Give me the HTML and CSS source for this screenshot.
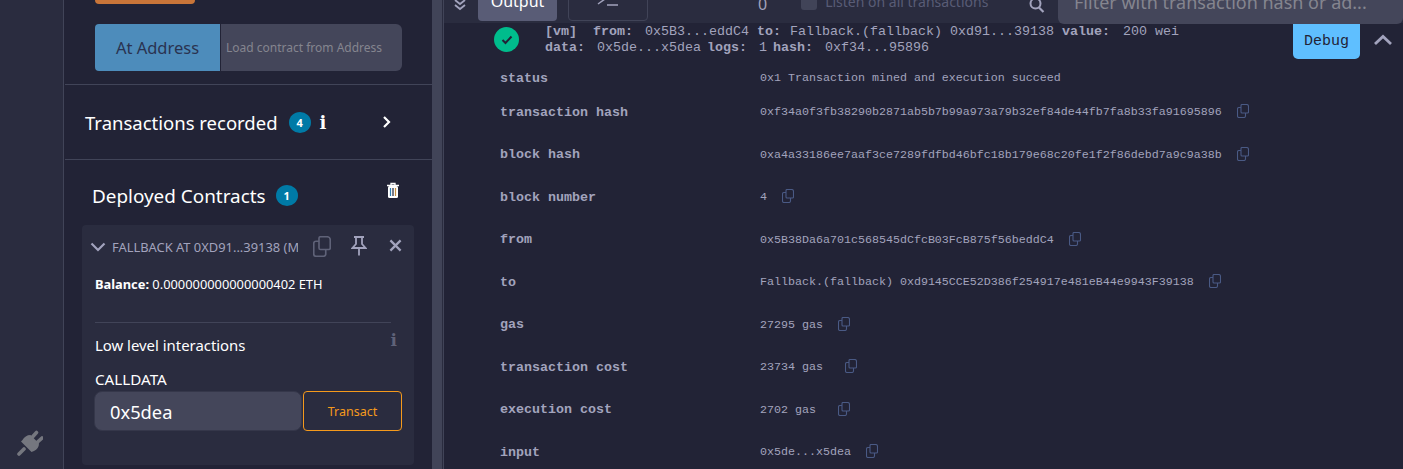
FILE: index.html
```html
<!DOCTYPE html>
<html lang="en">
<head>
    <meta charset="UTF-8">
    <meta name="viewport" content="width=device-width, initial-scale=1.0">
    <title>Remix - Fallback</title>
    <link rel="stylesheet" href="styles.css">
</head>
<body>
    <svg class="svg-defs" width="0" height="0">
        <symbol id="copy" viewBox="0 0 12 14">
            <path d="M4 1.500c0-.6.4-1 1-1h4.500c1 0 2 1 2 2v5.500c0 .6-.4 1-1 1H5c-.6 0-1-.4-1-1z" fill="none" stroke="currentColor" stroke-width="1.100"/>
            <path d="M4 3.500H2c-.8 0-1.500.6-1.500 1.500v7c0 .8.6 1.500 1.500 1.500h5c.8 0 1.500-.6 1.500-1.500v-3" fill="none" stroke="currentColor" stroke-width="1.100"/>
        </symbol>
    </svg>
    <div class="app">
        <div class="icon-panel">
            <svg class="plug" viewBox="0 0 26 26">
                <path d="M2 24l5-5" stroke="#75777f" stroke-width="3.600" stroke-linecap="round"/>
                <path d="M4 11.500l10.500 10.500 2.500-1c3-1.500 5-4 5-7.500l-8.500-8.500c-3.500 0-6.500 2-8 5z" fill="#75777f"/>
                <path d="M15 7.500l4.500-5M20 12.500l5-4.500" stroke="#75777f" stroke-width="3.600" stroke-linecap="round"/>
            </svg>
        </div>

        <div class="sidebar">
            <div class="deploy-btn"></div>
            <div class="at-address">
                <span class="at-btn">At Address</span>
                <span class="at-input">Load contract from Address</span>
            </div>
            <div class="tx-recorded">
                <span class="section-title">Transactions recorded</span>
                <span class="badge">4</span>
                <span class="info-white">i</span>
                <svg class="chevron-right" viewBox="0 0 10 14"><path d="M2 2l5 5-5 5" fill="none" stroke="#fff" stroke-width="2.200"/></svg>
            </div>
            <div class="deployed">
                <div class="deployed-head">
                    <span class="section-title section-title-wide">Deployed Contracts</span>
                    <span class="badge">1</span>
                    <svg class="trash" viewBox="0 0 14 16">
                        <path d="M1 3h12M5 3V1h4v2" fill="none" stroke="#fff" stroke-width="1.300"/>
                        <rect x="2" y="3.500" width="10" height="12" rx="1.500" fill="#fff"/>
                        <path d="M4.500 5.500v8" stroke="#2f7fb5" stroke-width="1.200"/>
                        <path d="M7 5.500v8" stroke="#222336" stroke-width="1.200"/>
                        <path d="M9.500 5.500v8" stroke="#c9913f" stroke-width="1.200"/>
                    </svg>
                </div>
                <div class="instance">
                    <div class="instance-head">
                        <svg class="chevron-down" viewBox="0 0 16 10"><path d="M1.500 1.500l6.500 6.500 6.500-6.500" fill="none" stroke="#a2a3bd" stroke-width="2.200"/></svg>
                        <span class="instance-name">FALLBACK AT 0XD91...39138 (MEMORY)</span>
                        <svg class="head-copy"><use href="#copy"/></svg>
                        <svg class="pin" viewBox="0 0 16 20">
                            <path d="M3 1h10M5 1v7l-3.500 4h13L11 8V1M8 12v7.500" fill="none" stroke="currentColor" stroke-width="1.800"/>
                        </svg>
                        <svg class="close" viewBox="0 0 14 14"><path d="M1.500 1.500l11 11M12.500 1.500l-11 11" stroke="currentColor" stroke-width="2.400"/></svg>
                    </div>
                    <div class="balance"><b>Balance:</b> 0.000000000000000402 ETH</div>
                    <div class="divider"></div>
                    <div class="low-level-title">
                        <span>Low level interactions</span>
                        <span class="info-grey">i</span>
                    </div>
                    <div class="calldata-label">CALLDATA</div>
                    <div class="calldata-row">
                        <span class="calldata-input">0x5dea</span>
                        <span class="transact-btn">Transact</span>
                    </div>
                </div>
            </div>
        </div>

        <div class="scrollbar"></div>

        <div class="main">
            <div class="toolbar">
                <svg class="double-chevron" viewBox="0 0 14 14">
                    <path d="M2 0l5 4 5-4M2 5l5 4 5-4" fill="none" stroke="#a2a3bd" stroke-width="1.800"/>
                </svg>
                <span class="tab tab-active">Output</span>
                <span class="tab tab-term">
                    <svg viewBox="0 0 22 14" width="22" height="14"><path d="M1 0l7 5-7 5M10 11h11" fill="none" stroke="#a2a3bd" stroke-width="1.500"/></svg>
                </span>
                <span class="tx-count">0</span>
                <span class="listen-check"></span>
                <span class="listen-label">Listen on all transactions</span>
                <svg class="search" viewBox="0 0 16 16">
                    <circle cx="6.500" cy="3.500" r="5" fill="none" stroke="#a2a3bd" stroke-width="2"/>
                    <path d="M10 7.500l4.500 4.500" stroke="#a2a3bd" stroke-width="2.200"/>
                </svg>
                <span class="filter">Filter with transaction hash or ad...</span>
            </div>

            <div class="log">
                <div class="log-head">
                    <span class="check">
                        <svg viewBox="0 0 12 10" width="12" height="10"><path d="M1.500 5l3 3 6-6.500" fill="none" stroke="#222336" stroke-width="2"/></svg>
                    </span>
                    <div class="log-summary">
                        <div><b class="key-vm">[vm]</b> &nbsp;<b>from:</b> 0x5B3...eddC4 <b class="key-to">to:</b> Fallback.(fallback) 0xd91...39138 <b class="key-value">value:</b> 200 wei</div>
                        <div><b>data:</b> 0x5de...x5dea <b class="key-logs">logs:</b> 1 <b class="key-hash">hash:</b> 0xf34...95896</div>
                    </div>
                    <span class="debug-btn">Debug</span>
                    <svg class="chevron-up" viewBox="0 0 20 12"><path d="M2 10l8-7.500 8 7.500" fill="none" stroke="#a2a3bd" stroke-width="2.800"/></svg>
                </div>

                <div class="tx-table">
                    <div class="tx-row tx-row-first"><span class="tx-key">status</span><span class="tx-val">0x1 Transaction mined and execution succeed</span></div>
                    <div class="tx-row"><span class="tx-key">transaction hash</span><span class="tx-val">0xf34a0f3fb38290b2871ab5b7b99a973a79b32ef84de44fb7fa8b33fa91695896</span><svg class="copy"><use href="#copy"/></svg></div>
                    <div class="tx-row"><span class="tx-key">block hash</span><span class="tx-val">0xa4a33186ee7aaf3ce7289fdfbd46bfc18b179e68c20fe1f2f86debd7a9c9a38b</span><svg class="copy"><use href="#copy"/></svg></div>
                    <div class="tx-row"><span class="tx-key">block number</span><span class="tx-val">4</span><svg class="copy"><use href="#copy"/></svg></div>
                    <div class="tx-row"><span class="tx-key">from</span><span class="tx-val">0x5B38Da6a701c568545dCfcB03FcB875f56beddC4</span><svg class="copy"><use href="#copy"/></svg></div>
                    <div class="tx-row"><span class="tx-key">to</span><span class="tx-val">Fallback.(fallback) 0xd9145CCE52D386f254917e481eB44e9943F39138</span><svg class="copy"><use href="#copy"/></svg></div>
                    <div class="tx-row"><span class="tx-key">gas</span><span class="tx-val">27295 gas</span><svg class="copy"><use href="#copy"/></svg></div>
                    <div class="tx-row"><span class="tx-key">transaction cost</span><span class="tx-val">23734 gas</span><svg class="copy copy-wide"><use href="#copy"/></svg></div>
                    <div class="tx-row"><span class="tx-key">execution cost</span><span class="tx-val">2702 gas</span><svg class="copy copy-wide"><use href="#copy"/></svg></div>
                    <div class="tx-row"><span class="tx-key">input</span><span class="tx-val">0x5de...x5dea</span><svg class="copy"><use href="#copy"/></svg></div>
                </div>
            </div>
        </div>
    </div>
</body>
</html>
```

FILE: styles.css
```css
html, body {
    margin: 0;
    padding: 0;
    height: 100%;
    overflow: hidden;
    background: #222336;
}
body {
    font-family: "Noto Sans", "Open Sans", sans-serif;
    color: #fff;
}
.svg-defs {
    display: none;
}
.app {
    display: flex;
    height: 469px;
    overflow: hidden;
}

/* icon panel */
.icon-panel {
    width: 64px;
    flex: none;
    background: #2a2c3f;
    border-right: 1px solid #414458;
    display: flex;
    flex-direction: column;
    justify-content: flex-end;
    padding-left: 17px;
    padding-bottom: 13px;
    box-sizing: border-box;
}
.plug {
    width: 26px;
    height: 26px;
}

/* sidebar */
.sidebar {
    width: 367px;
    flex: none;
    box-sizing: border-box;
    margin-left: 1px;
}
.deploy-btn {
    width: 100px;
    height: 4px;
    margin-left: 30px;
    background: #c97539;
    border-radius: 0 0 4px 4px;
}
.at-address {
    display: flex;
    height: 47px;
    margin: 20px 30px 0 30px;
    font-size: 12px;
}
.at-btn {
    width: 125px;
    background: #4d8cbb;
    color: #2a3350;
    font-size: 16.500px;
    border-radius: 4px 0 0 4px;
    display: flex;
    align-items: center;
    justify-content: center;
}
.at-input {
    flex: 1;
    margin-left: 1px;
    padding-left: 5px;
    background: #44465a;
    color: #84858f;
    border-radius: 0 6px 6px 0;
    display: flex;
    align-items: center;
}
.tx-recorded {
    display: flex;
    align-items: center;
    box-sizing: border-box;
    height: 76px;
    margin-top: 13px;
    padding-left: 20px;
    border-top: 1px solid #414458;
    border-bottom: 1px solid #414458;
}
.section-title {
    font-size: 18.500px;
}
.section-title-wide {
    font-size: 18.900px;
}
.badge {
    width: 22px;
    height: 21px;
    margin-left: 11px;
    border-radius: 50%;
    background: #007aa6;
    font-size: 11px;
    font-weight: 700;
    display: flex;
    align-items: center;
    justify-content: center;
}
.info-white {
    margin-left: 9px;
    font-family: "DejaVu Serif", serif;
    font-size: 18px;
    font-weight: 700;
}
.chevron-right {
    width: 10px;
    height: 14px;
    margin-left: 56px;
}
.deployed {
    padding: 0 18px 0 17px;
}
.deployed-head {
    display: flex;
    align-items: center;
    box-sizing: border-box;
    height: 65px;
    padding: 6px 0 0 10px;
}
.deployed-head .badge {
    margin-left: 10px;
}
.trash {
    width: 14px;
    height: 17px;
    margin-left: 88px;
    margin-top: -10px;
}
.instance {
    background: #2a2c3f;
    border-radius: 4px;
    height: 240px;
    padding: 0 12px 0 13px;
}
.instance-head {
    display: flex;
    align-items: center;
    height: 43px;
    color: #a2a3bd;
}
.chevron-down {
    width: 16px;
    height: 10px;
    flex: none;
    margin-left: -5px;
}
.instance-name {
    width: 186px;
    margin-left: 6px;
    flex: none;
    overflow: hidden;
    white-space: nowrap;
    font-size: 12.900px;
    color: #a2a3bd;
}
.head-copy {
    width: 18px;
    height: 21px;
    flex: none;
    margin-left: 15px;
    color: #5f6278;
}
.pin {
    width: 16px;
    height: 20px;
    flex: none;
    margin-left: 20px;
    margin-top: -2px;
}
.close {
    width: 13px;
    height: 13px;
    flex: none;
    margin-left: 22px;
    margin-top: -2px;
}
.balance {
    font-size: 12.850px;
    margin-top: 8px;
    height: 46px;
    line-height: 17px;
}
.divider {
    height: 1px;
    margin-right: 11px;
    background: #414458;
}
.low-level-title {
    display: flex;
    justify-content: space-between;
    margin-top: 11px;
    font-size: 14.900px;
    line-height: 22px;
}
.info-grey {
    margin-right: 5px;
    margin-top: -5px;
    font-family: "DejaVu Serif", serif;
    font-size: 17px;
    font-weight: 700;
    color: #5f6278;
}
.calldata-label {
    font-size: 15.200px;
    line-height: 20px;
    margin-top: 13px;
}
.calldata-row {
    display: flex;
    margin-top: 2px;
    height: 40px;
}
.calldata-input {
    width: 208px;
    margin-left: -1px;
    box-sizing: border-box;
    padding-left: 15px;
    background: #44465a;
    border: 1px solid #35374a;
    border-radius: 8px;
    font-size: 18.300px;
    display: flex;
    align-items: center;
}
.transact-btn {
    flex: 1;
    margin-left: 1px;
    border: 1px solid #f59a1c;
    border-radius: 4px;
    color: #f59a1c;
    font-size: 12.500px;
    display: flex;
    align-items: center;
    justify-content: center;
}

/* scrollbar between the panels */
.scrollbar {
    width: 10px;
    flex: none;
    background: #414458;
    border-right: 1px solid #2a2c3f;
}

/* terminal */
.main {
    flex: 1;
    min-width: 0;
    border-left: 1px solid #414458;
    font-family: "Liberation Mono", monospace;
}
.toolbar {
    height: 23px;
    background: #2a2c3f;
    position: relative;
    display: flex;
    align-items: flex-end;
    font-family: "Noto Sans", sans-serif;
}
.double-chevron {
    width: 14px;
    height: 14px;
    margin-left: 9px;
    margin-bottom: 9px;
    flex: none;
}
.tab {
    height: 40px;
    flex: none;
    box-sizing: border-box;
    display: flex;
    align-items: center;
    justify-content: center;
    border-radius: 4px;
    margin-bottom: 2px;
}
.tab-active {
    width: 79px;
    margin-left: 11px;
    background: #595c76;
    font-size: 16px;
}
.tab-term {
    width: 80px;
    margin-left: 11px;
    border: 1px solid #414458;
}
.tx-count {
    margin-left: 110px;
    margin-bottom: 5px;
    font-size: 16px;
    line-height: 28px;
    color: #a2a3bd;
}
.listen-check {
    width: 16px;
    height: 16px;
    margin-left: 34px;
    margin-bottom: 13px;
    background: #414458;
    border-radius: 3px;
}
.listen-label {
    margin-left: 8px;
    margin-bottom: 9px;
    font-size: 14px;
    line-height: 24px;
    color: #595c76;
}
.search {
    width: 16px;
    height: 16px;
    margin-left: 41px;
    margin-bottom: 7px;
}
.filter {
    position: absolute;
    left: 614px;
    right: 0;
    top: -20px;
    height: 44px;
    box-sizing: border-box;
    padding-left: 16px;
    background: #44465a;
    border-radius: 6px;
    font-size: 18px;
    line-height: 44px;
    color: #84858f;
    white-space: nowrap;
}
.log {
    color: #a2a3bd;
    font-size: 13.330px;
}
.log-head {
    display: flex;
    position: relative;
    padding-left: 50px;
    height: 42px;
}
.check {
    width: 25px;
    height: 25px;
    margin-top: 4px;
    flex: none;
    border-radius: 50%;
    background: #00bc8c;
    display: flex;
    align-items: center;
    justify-content: center;
}
.log-summary {
    margin-left: 26px;
    padding-top: 1px;
    line-height: 16px;
    white-space: nowrap;
}
.log-summary b {
    margin-right: 4px;
}
.log-summary .key-vm {
    margin-right: 0;
}
.log-summary .key-to {
    margin-right: 1px;
}
.log-summary .key-value {
    margin-right: 5px;
}
.log-summary .key-logs {
    margin-left: -2px;
}
.log-summary .key-hash {
    margin-left: -2px;
}
.debug-btn {
    position: absolute;
    left: 849px;
    top: 1px;
    width: 67px;
    height: 35px;
    border-radius: 0 0 5px 5px;
    background: #5fbfff;
    color: #222336;
    display: flex;
    align-items: center;
    justify-content: center;
    font-size: 15px;
}
.chevron-up {
    position: absolute;
    left: 929px;
    top: 11px;
    width: 20px;
    height: 12px;
}
.tx-table {
    padding-left: 56px;
}
.tx-row {
    display: flex;
    align-items: center;
    height: 42.500px;
}
.tx-row-first {
    height: 26px;
}
.tx-key {
    width: 260px;
    flex: none;
    font-weight: 700;
}
.tx-val {
    font-size: 11.670px;
    white-space: pre;
}
.copy {
    width: 12px;
    height: 14px;
    margin-left: 15px;
    margin-top: -2px;
    flex: none;
    color: #4a5a85;
}
.copy-wide {
    margin-left: 22px;
}
```
